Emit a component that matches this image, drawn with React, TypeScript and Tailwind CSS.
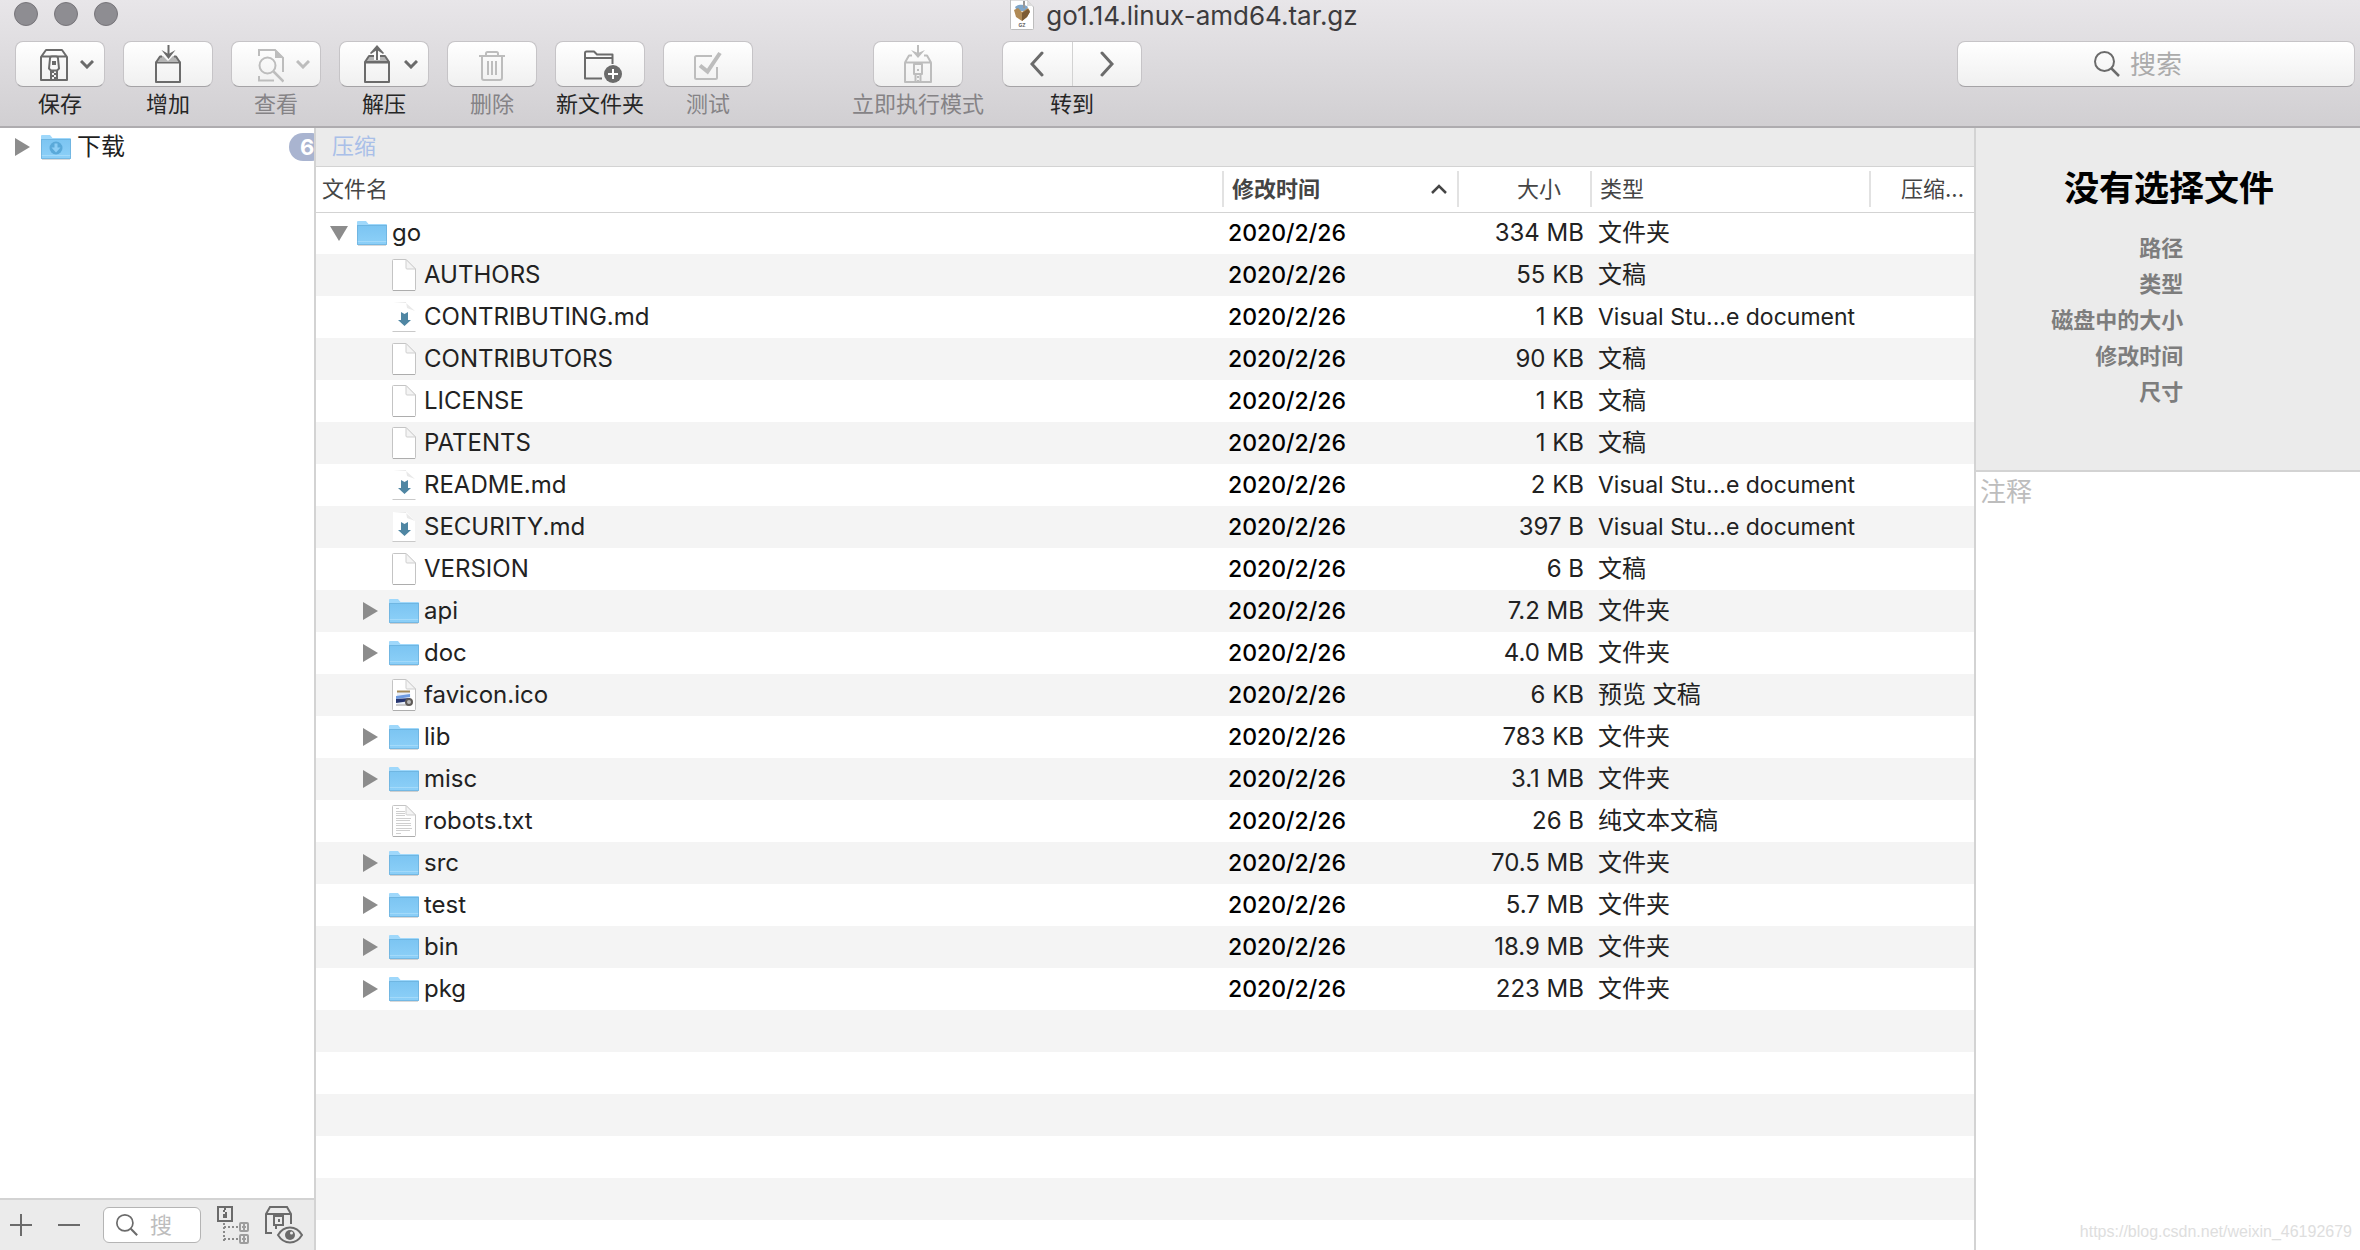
import React, { useState } from 'react';
import clsx from 'clsx';

type Kind = 'folder' | 'doc' | 'md' | 'image' | 'text';

interface Entry {
  name: string;
  kind: Kind;
  size: string;
  type: string;
}

const DATE = '2020/2/26';

const entries: Entry[] = [
  { name: 'AUTHORS', kind: 'doc', size: '55 KB', type: '文稿' },
  { name: 'CONTRIBUTING.md', kind: 'md', size: '1 KB', type: 'Visual Stu...e document' },
  { name: 'CONTRIBUTORS', kind: 'doc', size: '90 KB', type: '文稿' },
  { name: 'LICENSE', kind: 'doc', size: '1 KB', type: '文稿' },
  { name: 'PATENTS', kind: 'doc', size: '1 KB', type: '文稿' },
  { name: 'README.md', kind: 'md', size: '2 KB', type: 'Visual Stu...e document' },
  { name: 'SECURITY.md', kind: 'md', size: '397 B', type: 'Visual Stu...e document' },
  { name: 'VERSION', kind: 'doc', size: '6 B', type: '文稿' },
  { name: 'api', kind: 'folder', size: '7.2 MB', type: '文件夹' },
  { name: 'doc', kind: 'folder', size: '4.0 MB', type: '文件夹' },
  { name: 'favicon.ico', kind: 'image', size: '6 KB', type: '预览 文稿' },
  { name: 'lib', kind: 'folder', size: '783 KB', type: '文件夹' },
  { name: 'misc', kind: 'folder', size: '3.1 MB', type: '文件夹' },
  { name: 'robots.txt', kind: 'text', size: '26 B', type: '纯文本文稿' },
  { name: 'src', kind: 'folder', size: '70.5 MB', type: '文件夹' },
  { name: 'test', kind: 'folder', size: '5.7 MB', type: '文件夹' },
  { name: 'bin', kind: 'folder', size: '18.9 MB', type: '文件夹' },
  { name: 'pkg', kind: 'folder', size: '223 MB', type: '文件夹' },
];

const details = ['路径', '类型', '磁盘中的大小', '修改时间', '尺寸'];

/* ---------- small drawings ---------- */

const Triangle = ({ open }: { open?: boolean }) =>
  open ? (
    <svg width="18" height="15" viewBox="0 0 18 15" fill="#8c8c8c">
      <path d="M0 0h18L9 15z" />
    </svg>
  ) : (
    <svg width="15" height="18" viewBox="0 0 15 18" fill="#8c8c8c">
      <path d="M0 0v18l15-9z" />
    </svg>
  );

const FolderIcon = ({ download }: { download?: boolean }) => (
  <svg width="30" height="26" viewBox="0 0 30 26" className="shrink-0">
    <defs>
      <linearGradient id="folder" x1="0" y1="0" x2="0" y2="1">
        <stop offset="0" stopColor="#7cc5f2" />
        <stop offset="1" stopColor="#8dd0f8" />
      </linearGradient>
    </defs>
    <path d="M1 25.5h28" stroke="#000" strokeOpacity=".15" />
    <path d="M0 2a1 1 0 0 1 1-1h8l2.500 3H29a1 1 0 0 1 1 1v19a1 1 0 0 1-1 1H1a1 1 0 0 1-1-1z" fill="#9fd8fb" />
    <path d="M0 6h30v18a1 1 0 0 1-1 1H1a1 1 0 0 1-1-1z" fill="url(#folder)" />
    <path d="M0 5.500h30" stroke="#6fb6e2" />
    <path d="M0 21.500h30" stroke="#a3dafa" />
    <path d="M.5 6v18.500h29V6" fill="none" stroke="#6aaeda" strokeOpacity=".7" />
    {download && (
      <g>
        <circle cx="15" cy="14" r="6.500" fill="#5aa9d9" />
        <path d="M13.500 9.500h3v4h3L15 18.500l-4.500-5h3z" fill="#8ccdf5" />
      </g>
    )}
  </svg>
);

const FileIcon = ({ kind }: { kind: Kind }) => (
  <svg width="24" height="32" viewBox="0 0 24 32" className="shrink-0">
    {kind === 'md' ? (
      <g>
        <path d="M1 1h13l9 9v20H1z" fill="#fff" />
        <path d="M1 1h13l1 6 8 3-9-8z" fill="#e9e9e9" />
        <path d="M.5 30.500h23" stroke="#c9c9c9" />
        <path d="M9 11l3.500 2L16 11v8h3l-6.500 6L6 19h3z" fill="#4f86a3" />
      </g>
    ) : (
      <g>
        <path d="M.5 1.500a1 1 0 0 1 1-1H14L23.500 10v20.500a1 1 0 0 1-1 1h-21a1 1 0 0 1-1-1z" fill="#fff" stroke="#c4c4c4" />
        <path d="M14 .5V9a1 1 0 0 0 1 1h8.500z" fill="#f4f4f4" stroke="#cfcfcf" />
        <path d="M1 31.500h22" stroke="#adadad" />
      </g>
    )}
    {kind === 'image' && (
      <g>
        <path d="M5 13l13-1 1 13H5z" fill="#e8eef8" />
        <path d="M5 12.500h13" stroke="#a58b5a" strokeWidth="2" />
        <path d="M4 17l14-2v3L4 20z" fill="#6f9be0" />
        <path d="M4 20l14-1v3L4 24z" fill="#26356f" />
        <path d="M4 26h12" stroke="#c9c9c9" strokeWidth="2" />
        <circle cx="17" cy="23" r="3" fill="#b9b9b9" stroke="#5e5a57" strokeWidth="2" />
      </g>
    )}
    {kind === 'text' && (
      <path
        d="M4 3.500h3M4 6.500h9M4 8.500h9M4 10.500h9M4 13.500h15M4 15.500h14M4 18.500h15M4 20.500h15M4 23.500h16M4 25.500h14M4 28.500h5"
        stroke="#cfcfcf"
      />
    )}
  </svg>
);

const ArchiveFileIcon = () => (
  <svg width="24" height="30" viewBox="0 0 24 30" className="shrink-0 self-start">
    <path d="M.5 0v28.500a1 1 0 0 0 1 1h21a1 1 0 0 0 1-1V7L17 0z" fill="#fff" stroke="#bdbdbd" />
    <path d="M17 0v6h6.500z" fill="#ddd" />
    <path d="M5 7c3-3 10-3 13 0l-2 4H7z" fill="#7fa6c9" />
    <path d="M4 10l4-2 4 4 6-4 2 3-3 6-5 4-6-4z" fill="#b08a55" />
    <path d="M12 13l6-4 2 3-3 5-5 4z" fill="#7d5b33" />
    <path d="M14 1v7" stroke="#999" strokeWidth="2" />
    <text x="12" y="27" fontSize="5" textAnchor="middle" fill="#666" fontWeight="700">GZ</text>
  </svg>
);

const Chevron = () => (
  <svg width="14" height="9" viewBox="0 0 14 9" fill="none" stroke="currentColor" strokeWidth="3">
    <path d="M1 1l6 6 6-6" />
  </svg>
);

const Magnifier = ({ size = 26 }: { size?: number }) => (
  <svg width={size} height={size} viewBox="0 0 26 26" fill="none" stroke="#6b6b6b" strokeWidth="2" className="shrink-0">
    <circle cx="10.500" cy="10.500" r="9.500" />
    <path d="M17.500 17.500l7.500 7.500" strokeWidth="2.500" />
  </svg>
);

const Glyph = ({ w = 28, children }: { w?: number; children: React.ReactNode }) => (
  <svg width={w} height="40" viewBox={`0 0 ${w} 40`} fill="none" stroke="currentColor" strokeWidth="2" strokeLinejoin="round">
    {children}
  </svg>
);

const SaveGlyph = () => (
  <Glyph>
    <path d="M1 13l5-7h16l5 7v23H1zM1 12.500h26" />
    <path d="M10 14.500a2 2 0 0 1 2-2h4a2 2 0 0 1 2 2l1 10-2 2h-6l-2-2z" fill="#fafafa" />
    <path d="M12 17h4v4h-4z" fill="currentColor" stroke="none" />
    <path d="M11 27v9M17 27v9" />
    <path d="M12 27h2v2h-2zM14 29h2v2h-2zM12 31h2v2h-2zM14 33h2v2h-2z" fill="currentColor" stroke="none" />
  </Glyph>
);

const AddGlyph = () => (
  <Glyph w={30}>
    <path d="M3 18.500h24V38H3z" />
    <path d="M3 18l4-6h3l5 5 5-5h3l4 6z" fill="#b5b5b5" stroke="none" />
    <path d="M3 18.500l4-6h2M27 18.500l-4-6h-2" />
    <path d="M15.500 1v11" />
    <path d="M8.500 6l7 4 7-4-7 9z" fill="currentColor" stroke="none" />
  </Glyph>
);

const ViewGlyph = () => (
  <Glyph>
    <path d="M3 12V6h16l8 8v14M3 32v4.500h15" strokeLinejoin="miter" />
    <path d="M19 5v9h9z" fill="currentColor" stroke="none" />
    <circle cx="11.500" cy="21.500" r="8" />
    <path d="M17.500 27.500l10 10" strokeWidth="2.500" />
  </Glyph>
);

const ExtractGlyph = () => (
  <Glyph>
    <path d="M1 18.500h24V38H1z" />
    <path d="M1 18l4-6h16l4 6z" fill="#b5b5b5" />
    <path d="M13 16V5" stroke="#fafafa" strokeWidth="6" />
    <path d="M13 16V4" />
    <path d="M13 1l7 8-1 1-6-4-6 4-1-1z" fill="currentColor" stroke="none" />
  </Glyph>
);

const TrashGlyph = () => (
  <Glyph w={26}>
    <path d="M0 12h26M7 12V9.500A1.500 1.500 0 0 1 8.500 8h9A1.500 1.500 0 0 1 19 9.500V12M3 12v22a2 2 0 0 0 2 2h16a2 2 0 0 0 2-2V12" />
    <path d="M9 17v14M13 17v14M17 17v14" />
  </Glyph>
);

const NewFolderGlyph = () => (
  <Glyph w={44}>
    <path d="M24 34.500H7V9a1.500 1.500 0 0 1 1.500-1.500H16l3 3h15.500V20M7 14h27.500" />
    <circle cx="35" cy="30" r="9" fill="currentColor" stroke="none" />
    <path d="M30 30h10M35 25v10" stroke="#fff" />
  </Glyph>
);

const TestGlyph = () => (
  <Glyph>
    <path d="M18 12H2.500A1.500 1.500 0 0 0 1 13.500v20A1.500 1.500 0 0 0 2.500 35h19a1.500 1.500 0 0 0 1.500-1.500V23" />
    <path d="M6 21.500l7.500 6L26 9" strokeWidth="4" strokeLinejoin="miter" />
  </Glyph>
);

const InstantGlyph = () => (
  <Glyph>
    <path d="M1 18.500h26V38H1zM1 18.500l4-7h3M27 18.500l-4-7h-3M14 1v10" />
    <path d="M7 6l7 3 7-3-7 8z" fill="currentColor" stroke="none" />
    <path d="M10 20h8v10h-8zM11.500 31v7M16.500 31v7" />
    <path d="M13 25h2v2h-2zM13 32h2v2h-2zM13 36h2v2h-2z" fill="currentColor" stroke="none" />
  </Glyph>
);

const TreeGlyph = () => (
  <svg width="32" height="38" viewBox="0 0 32 38" fill="none" strokeWidth="2">
    <path d="M1 1h14v14H1z" stroke="#6b6b6b" />
    <path d="M7 2h2v2H7zM6 4h2v2H6zM8 6h2v2H8zM6 8h4v4H6z" fill="#6b6b6b" />
    <path d="M7 17v18M7 21h15M7 33h15" stroke="#8a8a8a" strokeDasharray="2 2" />
    <rect x="23" y="17" width="8" height="8" rx="1" stroke="#9d9d9d" />
    <rect x="23" y="29" width="8" height="8" rx="1" stroke="#9d9d9d" />
    <path d="M27 17v8M27 29v8M25 21h4M25 33h4" stroke="#9d9d9d" />
  </svg>
);

const PeekGlyph = () => (
  <svg width="38" height="38" viewBox="0 0 38 38" fill="none" stroke="#6b6b6b" strokeWidth="2">
    <path d="M7 27H1V8l4-7h17l4 7v10M1 8h25" />
    <path d="M9 10h9v9H9zM11 19v4" />
    <path d="M13 13h2v3h-2z" fill="#6b6b6b" stroke="none" />
    <path d="M13 29c6-10 18-10 24 0-6 10-18 10-24 0z" fill="#ebebeb" />
    <circle cx="25" cy="29" r="5" fill="#6b6b6b" stroke="none" />
    <circle cx="26.500" cy="27" r="1.500" fill="#ebebeb" stroke="none" />
  </svg>
);

/* ---------- toolbar ---------- */

const face = 'h-[46px] rounded-lg border border-[#c6c4c7] border-b-[#a5a3a6] bg-linear-to-b from-white to-[#f0f0f0]';

interface ToolProps {
  label: string;
  icon: React.ReactNode;
  menu?: boolean;
  disabled?: boolean;
}

const Tool: React.FC<ToolProps> = ({ label, icon, menu, disabled }) => (
  <label className="flex flex-col items-center gap-0.5">
    <button
      disabled={disabled}
      className={clsx(
        face,
        'flex w-[90px] items-center',
        menu ? 'justify-end gap-3 pr-2.5' : 'justify-center',
        disabled ? 'text-[#bdbdbd]' : 'text-[#6b6b6b]'
      )}
    >
      {icon}
      {menu && <Chevron />}
    </button>
    <span className={clsx('text-[22px] leading-[30px] whitespace-nowrap', disabled ? 'text-[#858386]' : 'text-[#262626]')}>
      {label}
    </span>
  </label>
);

const Header = () => (
  <header className="shrink-0 border-b-2 border-[#aeacaf] bg-linear-to-b from-[#e8e6e9] to-[#d1cfd2] pb-[7px]">
    <div className="grid h-8 grid-cols-[1fr_auto_1fr]">
      <div className="flex gap-4 pt-0.5 pl-3.5">
        {['关闭', '最小化', '缩放'].map((name) => (
          <button key={name} aria-label={name} className="size-6 rounded-full border border-[#77757a] bg-[#8e8d92]" />
        ))}
      </div>
      <h1 className="flex items-center gap-3 pl-2 text-[26px] leading-8 text-[#3d3c3e]">
        <ArchiveFileIcon />
        go1.14.linux-amd64.tar.gz
      </h1>
    </div>
    <div className="mt-[9px] flex items-start gap-[18px] pr-[5px] pl-[15px]">
      <Tool label="保存" icon={<SaveGlyph />} menu />
      <Tool label="增加" icon={<AddGlyph />} />
      <Tool label="查看" icon={<ViewGlyph />} menu disabled />
      <Tool label="解压" icon={<ExtractGlyph />} menu />
      <Tool label="删除" icon={<TrashGlyph />} disabled />
      <Tool label="新文件夹" icon={<NewFolderGlyph />} />
      <Tool label="测试" icon={<TestGlyph />} disabled />
      <div className="ml-[81px]">
        <Tool label="立即执行模式" icon={<InstantGlyph />} disabled />
      </div>
      <div className="flex flex-col items-center gap-0.5">
        <div className={clsx(face, 'flex w-[140px] divide-x divide-[#d2d2d2] text-[#6b6b6b]')}>
          <button aria-label="后退" className="flex flex-1 items-center justify-center">
            <svg width="14" height="26" viewBox="0 0 14 26" fill="none" stroke="currentColor" strokeWidth="3" strokeLinecap="round">
              <path d="M12 2L2 13l10 11" />
            </svg>
          </button>
          <button aria-label="前进" className="flex flex-1 items-center justify-center">
            <svg width="14" height="26" viewBox="0 0 14 26" fill="none" stroke="currentColor" strokeWidth="3" strokeLinecap="round">
              <path d="M2 2l10 11L2 24" />
            </svg>
          </button>
        </div>
        <span className="text-[22px] leading-[30px] text-[#262626]">转到</span>
      </div>
      <label className={clsx(face, 'ml-auto flex w-[398px] items-center gap-2.5 pl-[136px]')}>
        <Magnifier />
        <input aria-label="搜索" placeholder="搜索" className="min-w-0 flex-1 text-[26px] outline-none placeholder:text-[#ababab]" />
      </label>
    </div>
  </header>
);

/* ---------- side panel ---------- */

const Sidebar = () => (
  <aside className="flex w-[316px] shrink-0 flex-col overflow-hidden border-r-2 border-[#d3d3d3]">
    <ul className="flex-1">
      <li className="flex h-[38px] items-center pl-[15px]">
        <button aria-label="展开">
          <Triangle />
        </button>
        <span className="ml-[11px] flex items-center gap-1.5 text-2xl text-[#1f1f1f]">
          <FolderIcon download />
          下载
        </span>
        <span className="-mr-3 ml-auto h-7 w-[37px] shrink-0 rounded-full bg-[#a9b4d0] pl-[11px] text-[22px] leading-7 font-bold text-white">6</span>
      </li>
    </ul>
    <div className="flex h-[52px] items-center gap-4 border-t-2 border-[#d3d3d3] bg-[#ebebeb] pl-[5px]">
      <button aria-label="添加" className="px-[5px]">
        <svg width="22" height="22" stroke="#6b6b6b" strokeWidth="2">
          <path d="M0 11h22M11 0v22" />
        </svg>
      </button>
      <button aria-label="移除" className="px-[5px]">
        <svg width="22" height="22" stroke="#6b6b6b" strokeWidth="2">
          <path d="M0 11h22" />
        </svg>
      </button>
      <label className="ml-0.5 flex h-9 w-[98px] items-center gap-3 rounded-md border border-[#b4b4b4] bg-white px-3 text-[22px]">
        <Magnifier size={22} />
        <input aria-label="搜" placeholder="搜" className="w-full min-w-0 outline-none placeholder:text-[#bdbdbd]" />
      </label>
      <button aria-label="显示树形结构">
        <TreeGlyph />
      </button>
      <button aria-label="预览归档">
        <PeekGlyph />
      </button>
    </div>
  </aside>
);

/* ---------- file table ---------- */

interface RowProps {
  entry: Entry;
  root?: boolean;
  open?: boolean;
  onToggle?: () => void;
}

const Row: React.FC<RowProps> = ({ entry, root, open, onToggle }) => {
  const folder = entry.kind === 'folder';
  return (
    <tr className="h-[42px]">
      <td className={root ? 'pl-3' : 'pl-11'}>
        <div className="flex items-center">
          <button
            aria-label={entry.name}
            onClick={onToggle}
            className={clsx('mr-2 flex w-[21px] shrink-0 justify-center', !folder && 'invisible')}
          >
            <Triangle open={open} />
          </button>
          <span className="mr-[5px] flex w-[30px] shrink-0 justify-center">
            {folder ? <FolderIcon /> : <FileIcon kind={entry.kind} />}
          </span>
          <span className="whitespace-nowrap">{entry.name}</span>
        </div>
      </td>
      <td className="pl-1.5 text-[23px] font-medium text-black">{DATE}</td>
      <td className="pr-1.5 text-right">{entry.size}</td>
      <td className={clsx('pl-2 whitespace-nowrap', entry.kind === 'md' && 'text-[23px]')}>{entry.type}</td>
      <td />
    </tr>
  );
};

const bar = 'flex h-9 items-center border-l-2 border-[#e2e2e2]';

const FileTable = () => {
  const [open, setOpen] = useState(true);

  return (
    <table className="w-full table-fixed text-left text-2xl leading-8 text-[#222]">
      <colgroup>
        <col />
        <col className="w-[235px]" />
        <col className="w-[133px]" />
        <col className="w-[279px]" />
        <col className="w-[105px]" />
      </colgroup>
      <thead className="bg-white text-[22px] text-[#454545]">
        <tr className="h-[45px] border-b border-[#d3d3d3]">
          <th className="pl-1.5 font-normal">文件名</th>
          <th className="font-semibold">
            <div className={clsx(bar, 'justify-between pr-2.5 pl-2')}>
              修改时间
              <svg width="16" height="10" viewBox="0 0 16 10" fill="none" stroke="#454545" strokeWidth="2.500">
                <path d="M1 9l7-7 7 7" />
              </svg>
            </div>
          </th>
          <th className="font-normal">
            <div className={clsx(bar, 'justify-end pr-[29px]')}>大小</div>
          </th>
          <th className="font-normal">
            <div className={clsx(bar, 'pl-2')}>类型</div>
          </th>
          <th className="font-normal">
            <div className={clsx(bar, 'justify-end pr-2.5')}>压缩...</div>
          </th>
        </tr>
      </thead>
      <tbody>
        <Row
          root
          open={open}
          onToggle={() => setOpen(!open)}
          entry={{ name: 'go', kind: 'folder', size: '334 MB', type: '文件夹' }}
        />
        {open && entries.map((entry) => <Row key={entry.name} entry={entry} />)}
      </tbody>
    </table>
  );
};

/* ---------- info panel ---------- */

const Inspector = () => (
  <aside className="flex w-[386px] shrink-0 flex-col border-l-2 border-[#d3d3d3]">
    <div className="h-[344px] border-b-2 border-[#d3d3d3] bg-[#ebebeb] pt-[34px]">
      <h2 className="pl-0.5 text-center text-[35px] leading-[52px] font-bold text-black">没有选择文件</h2>
      <dl className="mt-4 grid grid-cols-[54%_1fr] text-[22px] leading-9 font-semibold text-[#7d7d7d]">
        {details.map((name) => (
          <React.Fragment key={name}>
            <dt className="text-right whitespace-nowrap">{name}</dt>
            <dd />
          </React.Fragment>
        ))}
      </dl>
    </div>
    <textarea
      aria-label="注释"
      placeholder="注释"
      className="flex-1 resize-none px-1 pt-0.5 text-[26px] leading-9 outline-none placeholder:text-[#bdbdbd]"
    />
  </aside>
);

export default function App() {
  return (
    <div className="relative flex h-screen flex-col overflow-hidden bg-white font-['Inter','Noto_Sans_CJK_SC',sans-serif]">
      <Header />
      <div className="flex min-h-0 flex-1">
        <Sidebar />
        <main className="flex min-w-0 flex-1 flex-col">
          <nav className="h-[39px] shrink-0 border-b border-[#d3d3d3] bg-[#ebebeb] pl-4">
            <a href="#" className="text-[22px] leading-9 text-[#a9bfe8]">
              压缩
            </a>
          </nav>
          {/* stripes go on below the last row */}
          <div className="min-h-0 flex-1 overflow-hidden bg-[linear-gradient(#fff_50%,#f4f4f4_50%)] bg-[length:100%_84px] bg-[position:0_45px]">
            <FileTable />
          </div>
        </main>
        <Inspector />
      </div>
      <p className="pointer-events-none absolute right-2 bottom-1.5 font-['Liberation_Sans',sans-serif] text-base text-[#dedede]">
        https://blog.csdn.net/weixin_46192679
      </p>
    </div>
  );
}
